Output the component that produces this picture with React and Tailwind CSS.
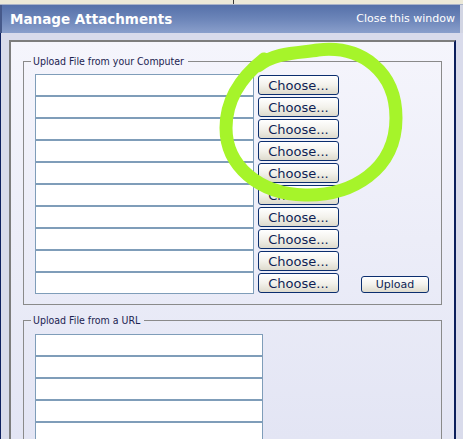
const COMPUTER_ROWS = 10
const URL_ROWS = 6

function XpButton({ label, className }) {
  return (
    <button
      type="button"
      className={`rounded-[3px] border border-[#0b2e6e] bg-linear-to-b from-[#ffffff] via-[#f3f2ec] to-[#dedbcd] text-[#0f1f55] leading-none ${className}`}
    >
      {label}
    </button>
  )
}

function Fieldset({ legend, className, children }) {
  return (
    <fieldset className={`border border-[#8a8a8a] pl-[7px] ${className}`}>
      <legend className="pl-[2px] pr-[4px] text-[10.5px] leading-[13px] text-[#1b2350] font-['DejaVu_Sans_Condensed','DejaVu_Sans',sans-serif] [font-stretch:condensed]">
        {legend}
      </legend>
      {children}
    </fieldset>
  )
}

export default function App() {
  return (
    <div className="relative w-[463px] h-[439px] overflow-hidden bg-[#d9dbeb] font-['DejaVu_Sans',sans-serif]">
      {/* strip above the window */}
      <div className="relative h-[4px] bg-[#ece9d8]">
        <div className="absolute left-[233px] top-0 h-[4px] w-px bg-[#3a3a3a]" />
      </div>
      <div className="h-px bg-[#aab3c8]" />

      {/* title bar */}
      <div className="flex h-[28px]">
        <div className="flex flex-1 items-center justify-between border-l-2 border-[#46598a] bg-linear-to-b from-[#5570a9] via-[#6c85b9] to-[#8a9fcb] pl-[8px] pr-[5px]">
          <span className="text-[13.5px] font-bold text-white">Manage Attachments</span>
          <span className="text-[11px] text-white">Close this window</span>
        </div>
        <div className="w-[3px] bg-[#d2d5e3]" />
      </div>

      {/* body */}
      <div className="flex h-[406px] border-l border-[#0f2160] pl-[8px] pr-[7px] pt-[7px]">
        <div className="flex-1 border-l-2 border-t-2 border-[#7d7d7d] border-r-2 border-r-[#0c1f5c] bg-linear-to-b from-[#f5f5fc] to-[#e3e5f4] px-[12px] pt-[13px]">
          <Fieldset legend="Upload File from your Computer" className="pt-[6px] pb-[10px]">
            <div className="flex flex-col pl-[4px]">
              {Array.from({ length: COMPUTER_ROWS }).map((_, i) => (
                <div key={i} className="flex h-[22px] items-start">
                  <input
                    type="text"
                    className="h-[22px] w-[219px] border border-[#7f9db9] bg-white outline-none"
                  />
                  <XpButton label="Choose..." className="ml-[4px] mt-[1px] h-[20px] w-[81px] text-[13px]" />
                  {i === COMPUTER_ROWS - 1 && (
                    <XpButton label="Upload" className="ml-[22px] mt-[4px] h-[17px] w-[68px] text-[11px]" />
                  )}
                </div>
              ))}
            </div>
          </Fieldset>

          <Fieldset legend="Upload File from a URL" className="mt-[9px] pt-[7px]">
            <div className="flex flex-col pl-[4px]">
              {Array.from({ length: URL_ROWS }).map((_, i) => (
                <input
                  key={i}
                  type="text"
                  className="h-[22px] w-[228px] border border-[#7f9db9] bg-white outline-none"
                />
              ))}
            </div>
          </Fieldset>
        </div>
      </div>

      {/* hand-drawn highlight */}
      <svg className="pointer-events-none absolute inset-0" width="463" height="439" viewBox="0 0 463 439">
        <path
          d="M 258 66 C 275 52, 300 53, 318 50 C 362 45, 396 72, 396 118 C 396 170, 352 196, 305 195 C 258 194, 226 165, 226 128 C 226 100, 240 78, 264 59"
          fill="none"
          stroke="#a6f42a"
          strokeWidth="13"
          strokeLinecap="round"
          strokeLinejoin="round"
        />
      </svg>
    </div>
  )
}
